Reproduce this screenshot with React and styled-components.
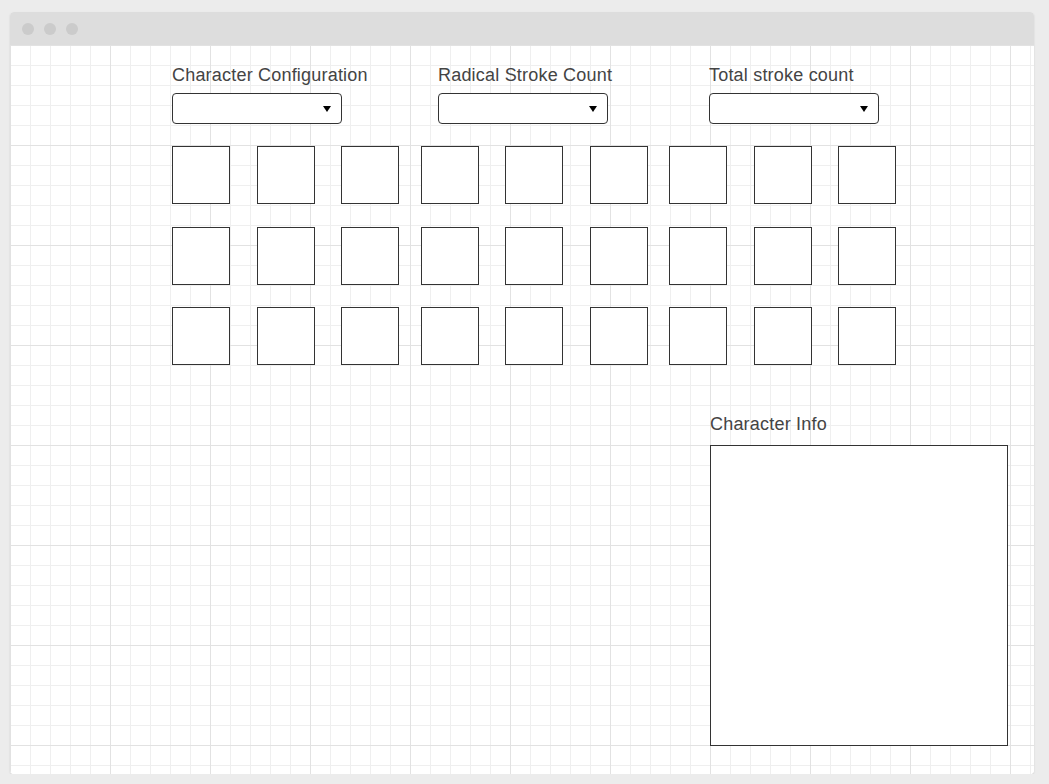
import React from 'react'
import styled, { createGlobalStyle } from 'styled-components'

const GlobalStyle = createGlobalStyle`
  html, body {
    margin: 0;
    padding: 0;
    background: #ececec;
    font-family: "Liberation Sans", Arial, sans-serif;
  }
`

const groups = [
  ['a', 'b', 'c'],
  ['d', 'e', 'f'],
  ['g', 'h', 'i'],
]

function Select() {
  return (
    <Dropdown>
      <Arrow />
    </Dropdown>
  )
}

function App() {
  return (
    <>
      <GlobalStyle />
      <Window>
        <TitleBar>
          <Dot />
          <Dot />
          <Dot />
        </TitleBar>
        <Canvas>
          <Filters>
            <Field>
              <Label>Character Configuration</Label>
              <Select />
            </Field>
            <Field>
              <Label>Radical Stroke Count</Label>
              <Select />
            </Field>
            <Field>
              <Label>Total stroke count</Label>
              <Select />
            </Field>
          </Filters>

          <Board>
            {[0, 1, 2].map(r => (
              <BoxRow key={r}>
                {groups.map((g, gi) => (
                  <Group key={gi}>
                    {g.map(k => <Cell key={k} />)}
                  </Group>
                ))}
              </BoxRow>
            ))}
          </Board>

          <Info>
            <Label>Character Info</Label>
            <InfoBox />
          </Info>
        </Canvas>
      </Window>
    </>
  )
}

const Window = styled.div`
  position: relative;
  margin: 12px 0 0 10px;
  width: 1024px;
  height: 762px;
  background: #fff;
  border-radius: 4px;
  box-shadow: 0 1px 2px rgba(0, 0, 0, 0.12);
  display: flex;
  flex-direction: column;
  overflow: hidden;
`

const TitleBar = styled.div`
  height: 33px;
  flex: none;
  background: #dddddd;
  display: flex;
  align-items: center;
  gap: 10px;
  padding-left: 12px;
`

const Dot = styled.span`
  width: 12px;
  height: 12px;
  border-radius: 50%;
  background: #cbcbcb;
`

const Canvas = styled.div`
  flex: 1;
  padding: 20px 0 0 162px;
  background-color: #fff;
  background-image:
    linear-gradient(to right, #e2e2e2 1px, transparent 1px),
    linear-gradient(to bottom, #e2e2e2 1px, transparent 1px),
    linear-gradient(to right, #efefef 1px, transparent 1px),
    linear-gradient(to bottom, #efefef 1px, transparent 1px);
  background-size: 100px 100px, 100px 100px, 20px 20px, 20px 20px;
  background-position: 0 0;
`

const Filters = styled.div`
  display: flex;
`

const Field = styled.div`
  display: flex;
  flex-direction: column;
  gap: 8px;
  width: 266px;
  &:nth-child(2) { width: 271px; }
`

const Label = styled.div`
  font-size: 18px;
  line-height: 20px;
  color: #444;
  letter-spacing: 0.2px;
`

const Dropdown = styled.div`
  width: 170px;
  height: 31px;
  box-sizing: border-box;
  border: 1px solid #333;
  border-radius: 4px;
  background: #fff;
  display: flex;
  align-items: center;
  justify-content: flex-end;
  padding-right: 10px;
`

const Arrow = styled.span`
  width: 0;
  height: 0;
  border-left: 4.5px solid transparent;
  border-right: 4.5px solid transparent;
  border-top: 6px solid #000;
`

const Board = styled.div`
  margin-top: 22px;
  display: flex;
  flex-direction: column;
  gap: 22.5px;
`

const BoxRow = styled.div`
  display: flex;
  gap: 21.5px;
`

const Group = styled.div`
  display: flex;
  gap: 26.5px;
`

const Cell = styled.div`
  width: 58px;
  height: 58px;
  box-sizing: border-box;
  border: 1px solid #333;
  background: #fff;
`

const Info = styled.div`
  margin: 49px 0 0 538px;
  display: flex;
  flex-direction: column;
  gap: 11px;
`

const InfoBox = styled.div`
  width: 298px;
  height: 301px;
  box-sizing: border-box;
  border: 1px solid #333;
  background: #fff;
`

export default App
